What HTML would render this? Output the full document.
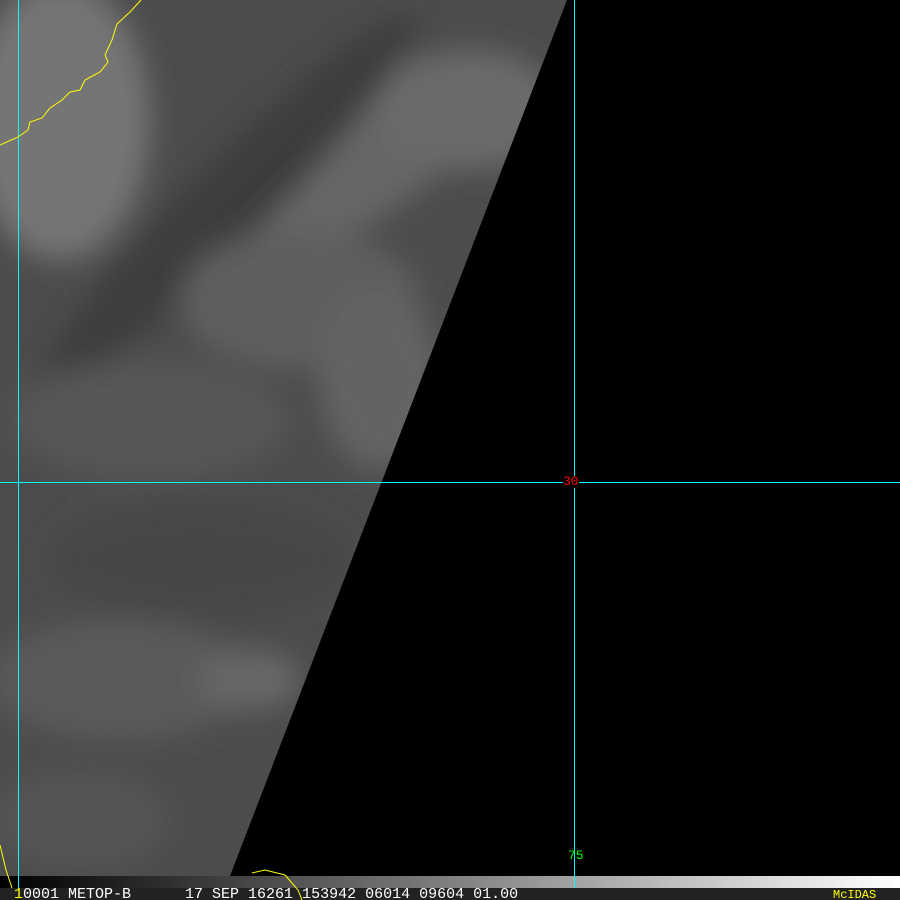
<!DOCTYPE html>
<html><head><style>
html,body{margin:0;padding:0;background:#000;width:900px;height:900px;overflow:hidden;position:relative;font-family:"Liberation Mono",monospace}
.t{position:absolute;font-size:15px;line-height:12px;white-space:pre}
</style></head><body>
<svg width="900" height="900" style="position:absolute;left:0;top:0">
<defs>
<clipPath id="c"><polygon points="0,0 567,0 230,876 0,876"/></clipPath>
<filter id="b"><feGaussianBlur stdDeviation="14"/></filter>
<linearGradient id="g" x1="0" y1="0" x2="900" y2="0" gradientUnits="userSpaceOnUse">
<stop offset="0" stop-color="#000"/><stop offset="0.2" stop-color="#333"/><stop offset="1" stop-color="#fff"/></linearGradient>
</defs>
<g clip-path="url(#c)">
<rect x="0" y="0" width="600" height="876" fill="#4c4c4c"/>
<g filter="url(#b)">
<ellipse cx="60" cy="120" rx="90" ry="140" fill="#747474"/>
<ellipse cx="340" cy="160" rx="160" ry="70" fill="#666" transform="rotate(-30 340 160)"/>
<ellipse cx="470" cy="110" rx="90" ry="60" fill="#6a6a6a"/>
<ellipse cx="230" cy="200" rx="260" ry="40" fill="#3c3c3c" transform="rotate(-45 230 200)"/>
<ellipse cx="300" cy="300" rx="120" ry="70" fill="#5e5e5e"/>
<ellipse cx="380" cy="380" rx="60" ry="90" fill="#646464"/>
<ellipse cx="150" cy="420" rx="140" ry="60" fill="#575757"/>
<ellipse cx="200" cy="560" rx="150" ry="60" fill="#464646"/>
<ellipse cx="120" cy="680" rx="130" ry="60" fill="#5a5a5a"/>
<ellipse cx="250" cy="680" rx="50" ry="30" fill="#686868"/>
<ellipse cx="80" cy="820" rx="90" ry="50" fill="#545454"/>
</g>
</g>
<rect x="0" y="876" width="900" height="12" fill="url(#g)"/>
<rect x="0" y="888" width="900" height="12" fill="#222"/>
<line x1="18.5" y1="0" x2="18.5" y2="888" stroke="#0ff" stroke-width="1"/>
<line x1="574.5" y1="0" x2="574.5" y2="888" stroke="#0ff" stroke-width="1"/>
<line x1="0" y1="482.5" x2="900" y2="482.5" stroke="#0ff" stroke-width="1"/>
<polyline fill="none" stroke="#ff0" stroke-width="1" points="141,0 130,12 117,24 112,40 105,55 108,62 100,72 85,80 80,90 70,92 62,100 50,108 42,118 30,122 28,130 18,137 0,145"/>
<polyline fill="none" stroke="#ff0" stroke-width="1" points="0,845 6,870 12,888"/>
<polyline fill="none" stroke="#ff0" stroke-width="1" points="252,873 265,870 285,875 298,890 302,900"/>
</svg>
<div class="t" style="left:563px;top:476px;color:#f00;font-size:13px;background:#000">30</div>
<div class="t" style="left:568px;top:850px;color:#0f0;font-size:13px">75</div>
<div class="t" style="left:14px;top:889px;color:#fff"><span style="color:#ff0">1</span>0001 METOP-B      17 SEP 16261 153942 06014 09604 01.00</div>
<div class="t" style="left:833px;top:889px;color:#ff0;font-size:12px">McIDAS</div>
</body></html>
